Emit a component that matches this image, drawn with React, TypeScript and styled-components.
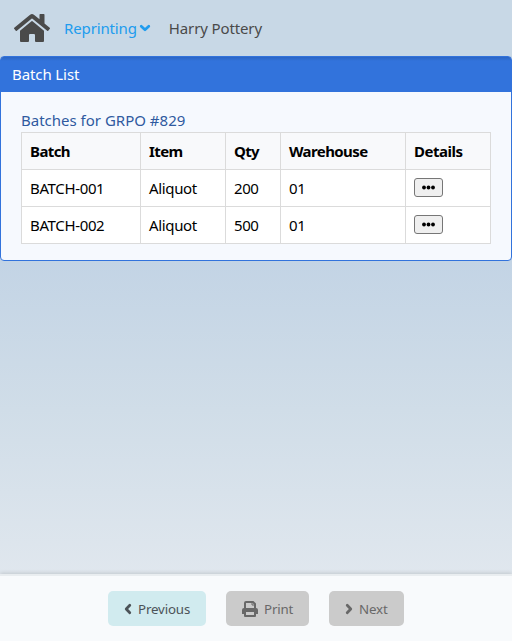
import React from "react";
import styled, { createGlobalStyle } from "styled-components";
import { FaHome } from "react-icons/fa";

const GlobalStyle = createGlobalStyle`
  * { box-sizing: border-box; }
  body {
    margin: 0;
    font-family: "Noto Sans", "Open Sans", sans-serif;
    font-size: 15px;
    line-height: 24px;
    color: #000;
  }
`;

const Page = styled.div`
  display: flex;
  flex-direction: column;
  height: 641px;
  overflow: hidden;
  background: linear-gradient(#c3d4e5 262px, #d0dde8 410px, #e0e7ee 574px);
`;

const Navbar = styled.nav`
  display: flex;
  align-items: center;
  height: 56px;
  flex: none;
  padding: 0 14px;
  background: #c8d8e6;
  color: #4a4a4a;
`;

const NavLink = styled.a<{ $active?: boolean; $gap: number }>`
  display: flex;
  align-items: center;
  height: 26px;
  margin-left: ${(p) => p.$gap}px;
  padding-bottom: 1px;
  color: ${(p) => (p.$active ? "#209cee" : "#4a4a4a")};
  letter-spacing: -0.13px;
  svg { margin-left: 4px; }
`;

const Card = styled.section`
  flex: none;
  height: 205px;
  border: 1px solid #3273dc;
  border-radius: 4px;
  background: #f6f9fe;
`;

const CardHeader = styled.header`
  height: 35px;
  padding: 5px 11px;
  border-radius: 2px 2px 0 0;
  background: linear-gradient(#2b65c4, #3273dc 4px);
  color: #fff;
  letter-spacing: -0.1px;
`;

const CardBody = styled.div`
  padding: 16px 20px;
`;

const Subtitle = styled.div`
  height: 24px;
  color: #2f5aa0;
`;

const Table = styled.table`
  width: 470px;
  table-layout: fixed;
  border-collapse: collapse;
  background: #fff;
`;

const Cell = styled.td<{ $spacing?: string }>`
  height: 37px;
  padding: 0 8px;
  border: 1px solid #dbdbdb;
  letter-spacing: ${(p) => p.$spacing ?? "-0.35px"};
  white-space: nowrap;
`;

const HeadCell = styled(Cell).attrs({ as: "th" })<{ $width: number }>`
  width: ${(p) => p.$width}px;
  background: #f8f9fb;
  text-align: left;
  font-weight: 700;
`;

const MoreButton = styled.button`
  display: flex;
  align-items: center;
  justify-content: center;
  width: 29px;
  height: 19px;
  margin: 0 0 2px;
  padding: 0;
  border: 1px solid #767676;
  border-radius: 3px;
  background: #efefef;
`;

const Footer = styled.footer`
  display: flex;
  justify-content: center;
  gap: 20px;
  height: 67px;
  flex: none;
  margin-top: auto;
  padding-top: 15px;
  border-top: 2px solid #e9edf0;
  background: #f8fafc;
  box-shadow: 0 -1px 4px rgba(10, 10, 10, 0.14);
`;

const FooterButton = styled.button<{ $width: number; $muted?: boolean }>`
  display: flex;
  align-items: center;
  gap: 6px;
  width: ${(p) => p.$width}px;
  height: 35px;
  padding: 1px 0 0 16px;
  border: 0;
  border-radius: 5px;
  background: ${(p) => (p.$muted ? "#cbcbcb" : "#d1ebef")};
  color: ${(p) => (p.$muted ? "#686868" : "#4c5358")};
  font: 13.3px "Noto Sans", sans-serif;
  letter-spacing: -0.15px;
`;

const Chevron = styled.svg.attrs({ viewBox: "0 0 8 12", width: 8, height: 12 })<{ $turn?: number }>`
  flex: none;
  fill: none;
  stroke: currentColor;
  stroke-width: 2.7;
  stroke-linecap: round;
  stroke-linejoin: round;
  transform: rotate(${(p) => p.$turn ?? 0}deg);
`;

const PrintIcon = () => (
  <svg width="16" height="16" viewBox="0 0 16 16" fill="none">
    <path d="M3 8V2Q3 1 4 1H11L13 3V8" stroke="currentColor" strokeWidth="2" />
    <path d="M10 1V4H13" stroke="currentColor" />
    <path
      fill="currentColor"
      fillRule="evenodd"
      d="M2 7H14Q16 7 16 9V12.5Q16 13 15.5 13H14V15Q14 16 13 16H3Q2 16 2 15V13H0.5Q0 13 0 12.5V9Q0 7 2 7ZM4 11V14H12V11Z"
    />
  </svg>
);

const columns = [
  { name: "Batch", width: 119, spacing: "-0.6px" },
  { name: "Item", width: 85, spacing: "-0.6px" },
  { name: "Qty", width: 55, spacing: "-0.65px" },
  { name: "Warehouse", width: 125, spacing: "-0.6px" },
  { name: "Details", width: 85, spacing: "-0.5px" },
];

const batches = [
  { id: "BATCH-001", item: "Aliquot", qty: 200, warehouse: "01" },
  { id: "BATCH-002", item: "Aliquot", qty: 500, warehouse: "01" },
];

export default function App() {
  return (
    <Page>
      <GlobalStyle />
      <Navbar>
        <FaHome size={36} />
        <NavLink $active $gap={14}>
          Reprinting
          <Chevron $turn={90}><path d="M2.2 2.2 L5.8 6 L2.2 9.8" /></Chevron>
        </NavLink>
        <NavLink $gap={20}>Harry Pottery</NavLink>
      </Navbar>
      <Card>
        <CardHeader>Batch List</CardHeader>
        <CardBody>
          <Subtitle>Batches for GRPO #829</Subtitle>
          <Table>
            <thead>
              <tr>
                {columns.map((c) => (
                  <HeadCell key={c.name} $width={c.width} $spacing={c.spacing}>{c.name}</HeadCell>
                ))}
              </tr>
            </thead>
            <tbody>
              {batches.map((b) => (
                <tr key={b.id}>
                  <Cell>{b.id}</Cell>
                  <Cell>{b.item}</Cell>
                  <Cell $spacing="-0.45px">{b.qty}</Cell>
                  <Cell>{b.warehouse}</Cell>
                  <Cell>
                    <MoreButton aria-label="Details">
                      <svg width="13" height="5" viewBox="0 0 13 5">
                        <circle cx="2" cy="2.5" r="1.9" />
                        <circle cx="6.5" cy="2.5" r="1.9" />
                        <circle cx="11" cy="2.5" r="1.9" />
                      </svg>
                    </MoreButton>
                  </Cell>
                </tr>
              ))}
            </tbody>
          </Table>
        </CardBody>
      </Card>
      <Footer>
        <FooterButton $width={98}>
          <Chevron $turn={180}><path d="M2.2 2.2 L5.8 6 L2.2 9.8" /></Chevron>
          Previous
        </FooterButton>
        <FooterButton $width={83} $muted>
          <PrintIcon />
          Print
        </FooterButton>
        <FooterButton $width={75} $muted>
          <Chevron><path d="M2.2 2.2 L5.8 6 L2.2 9.8" /></Chevron>
          Next
        </FooterButton>
      </Footer>
    </Page>
  );
}
